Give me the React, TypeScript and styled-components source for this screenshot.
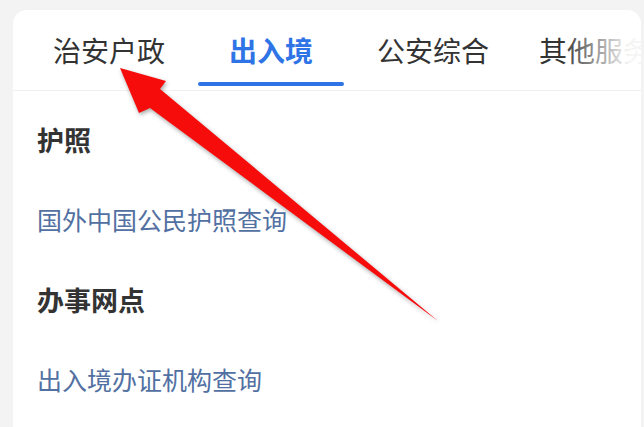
import React from "react";
import styled, { createGlobalStyle } from "styled-components";

const Global = createGlobalStyle`
  html, body { margin: 0; padding: 0; background: #f3f3f4; }
  body { font-family: "Noto Sans CJK SC", "Noto Sans", sans-serif; overflow: hidden; }
`;

const Page = styled.div`
  position: relative;
  width: 644px;
  height: 427px;
  padding: 10px 0 0 13px;
  box-sizing: border-box;
  overflow: hidden;
`;

const Card = styled.div`
  position: relative;
  width: 628px;
  height: 417px;
  background: #ffffff;
  border-radius: 14px 14px 0 0;
  overflow: hidden;
`;

const TabBar = styled.div`
  position: relative;
  display: flex;
  height: 80px;
  padding-left: 15px;
  border-bottom: 1px solid #f0f0f0;
  overflow: hidden;
`;

const Tab = styled.div<{ $active?: boolean }>`
  position: relative;
  flex: 0 0 162px;
  display: flex;
  align-items: center;
  justify-content: center;
  font-size: 28px;
  color: ${(p) => (p.$active ? "#2f74e6" : "#333333")};
  font-weight: ${(p) => (p.$active ? 700 : 400)};
  white-space: nowrap;
  &::after {
    content: "";
    display: ${(p) => (p.$active ? "block" : "none")};
    position: absolute;
    left: 8px;
    right: 8px;
    bottom: 4px;
    height: 4px;
    border-radius: 2px;
    background: #2f74e6;
  }
`;

const Fade = styled.div`
  position: absolute;
  top: 0;
  right: 0;
  width: 80px;
  height: 100%;
  background: linear-gradient(to right, rgba(255,255,255,0), rgba(255,255,255,0.95) 85%);
`;

const Content = styled.div`
  display: flex;
  flex-direction: column;
  padding: 8px 24px 0;
`;

const Row = styled.div<{ $heading?: boolean }>`
  height: 80px;
  display: flex;
  align-items: center;
  font-size: ${(p) => (p.$heading ? "27px" : "25px")};
  font-weight: ${(p) => (p.$heading ? 700 : 400)};
  color: ${(p) => (p.$heading ? "#333333" : "#5270a2")};
  white-space: nowrap;
`;

const Overlay = styled.svg`
  position: absolute;
  left: 0;
  top: 0;
  width: 644px;
  height: 427px;
  pointer-events: none;
  filter: drop-shadow(1px 2px 2px rgba(0, 0, 0, 0.35));
`;

const tabs = ["治安户政", "出入境", "公安综合", "其他服务"];

export default function App() {
  return (
    <>
      <Global />
      <Page>
        <Card>
          <TabBar>
            {tabs.map((t) => (
              <Tab key={t} $active={t === "出入境"}>
                {t}
              </Tab>
            ))}
            <Fade />
          </TabBar>
          <Content>
            <Row $heading>护照</Row>
            <Row>国外中国公民护照查询</Row>
            <Row $heading>办事网点</Row>
            <Row>出入境办证机构查询</Row>
          </Content>
        </Card>
        <Overlay viewBox="0 0 644 427">
          <polygon
            points="120,68 166,81 160,89 438,321 150,108 139,113"
            fill="#f70c0c"
          />
        </Overlay>
      </Page>
    </>
  );
}
